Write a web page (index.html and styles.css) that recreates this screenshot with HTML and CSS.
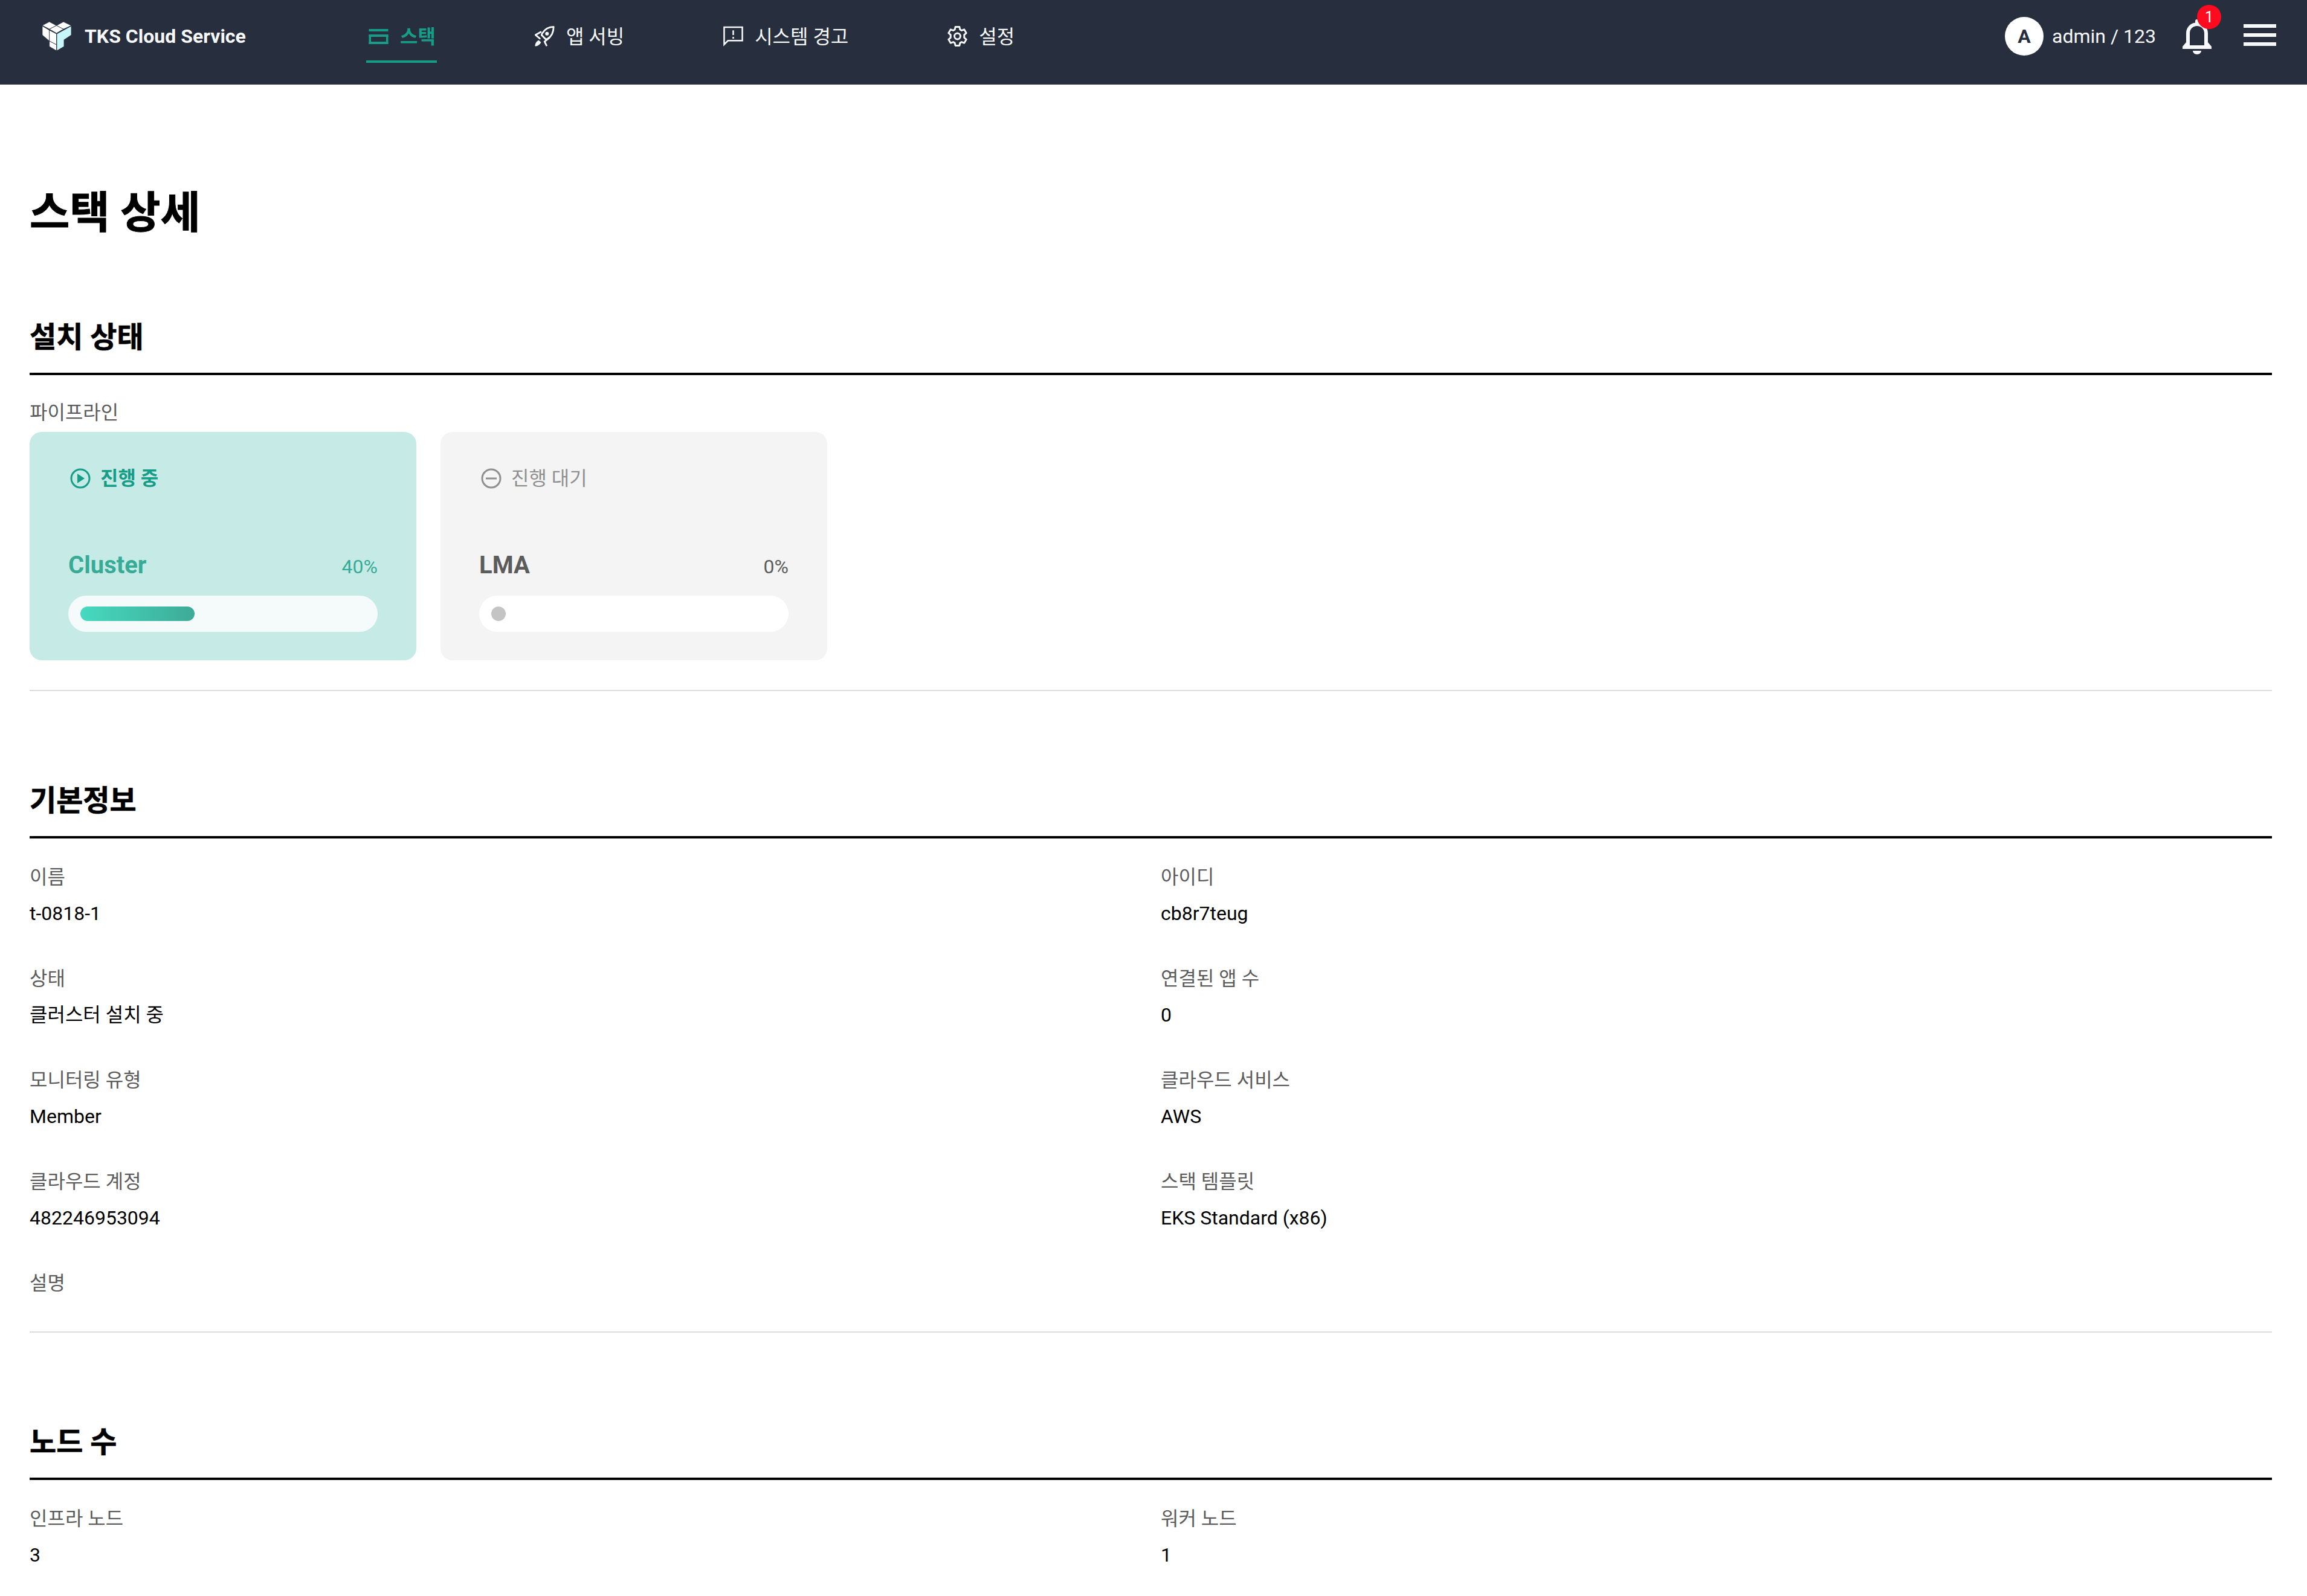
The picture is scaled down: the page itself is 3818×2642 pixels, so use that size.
FILE: index.html
```html
<!DOCTYPE html>
<html lang="ko">
<head>
<meta charset="utf-8">
<title>스택 상세</title>
<link rel="stylesheet" href="styles.css">
</head>
<body>
<header class="topbar">
  <div class="brand">
    <svg class="brand-logo" viewBox="0 0 48 48">
      <g fill="#fff" stroke="#272e3d" stroke-width="0.8" stroke-linejoin="round">
        <path d="M0 6 11.700 0l11.800 6.300-11.800 6z"/>
        <path d="M23.500 6.300 35 0l13 6.300-13 6z"/>
        <path d="M11.700 12.300l11.800-6 11.500 6-11.500 6.700z"/>
        <path d="M0 7l11.700 7v18L0 22z"/>
        <path d="M11.700 14l11.800 6v18l-11.800-6z"/>
        <path d="M11.700 32l11.800 6v10l-11.800-7z"/>
        <path fill="#c8f7fb" d="M24 20 48 7v15l-12 8v11l-12 7z"/>
      </g>
    </svg>
    <span class="brand-name">TKS Cloud Service</span>
  </div>
  <nav class="nav">
    <a class="nav-item active">
      <svg class="nav-icon" viewBox="0 0 32 34" fill="currentColor"><path d="M0 5h32v4H0zM0 14h32v4H0zM0 26h32v4H0z"/><path d="M0 14h3.500v16H0zM28.500 14H32v16h-3.500z"/></svg>
      <span>스택</span>
    </a>
    <a class="nav-item">
      <svg class="nav-icon" viewBox="0 0 34 36" fill="none" stroke="currentColor" stroke-width="3" stroke-linejoin="round" stroke-linecap="round"><path d="M32.500 1.500C24 1.500 17 6 12.500 13l-1 3L19 23.500l3-1C29 18 32.500 11 32.500 1.500z"/><path d="M10 10.700 1 15.700 8.300 22"/><path d="M25 20.700 16.700 27.300 20 34"/><path fill="currentColor" stroke="none" d="M0 35.500C0 30 3 27 6.500 25l4 3.500C9 32 5 35.500 0 35.500z"/><circle fill="currentColor" stroke="none" cx="21" cy="13.500" r="3.200"/></svg>
      <span>앱 서빙</span>
    </a>
    <a class="nav-item">
      <svg class="nav-icon" viewBox="0 0 34 34" fill="none" stroke="currentColor" stroke-width="2.600"><path d="M1.500 1.500h31v23H8L1.500 31z"/><path d="M17 7v8M17 18v3"/></svg>
      <span>시스템 경고</span>
    </a>
    <a class="nav-item">
      <svg class="nav-icon" viewBox="1.500 1 21 22" fill="none" stroke="currentColor" stroke-width="1.900" stroke-linejoin="round"><circle cx="12" cy="12" r="3.200"/><path d="M9.800 2h4.400l.6 2.800 1.700 1 2.800-1 2.200 3.800-2.200 1.900v3l2.200 1.900-2.200 3.800-2.800-1-1.700 1-.6 2.800H9.800l-.6-2.800-1.700-1-2.800 1-2.200-3.800 2.200-1.900v-3L2.500 8.600l2.200-3.800 2.800 1 1.700-1z"/></svg>
      <span>설정</span>
    </a>
  </nav>
  <div class="user">
    <span class="avatar">A</span>
    <span class="user-name">admin / 123</span>
    <div class="bell">
      <svg class="bell-icon" viewBox="0 0 48 58" fill="#f7f8fa"><path fill-rule="evenodd" d="M24 0c2 0 3 1 3 3v2.500C36 7 42 14 42 23v15l6 7v4H0v-4l6-7V23C6 14 12 7 21 5.500V3c0-2 1-3 3-3zM24 11c-7 0-12 5-12 12v20h24V23c0-7-5-12-12-12z"/><path d="M17 52h14c0 3-3 6-7 6s-7-3-7-6z"/></svg>
      <span class="badge">1</span>
    </div>
    <button class="menu" aria-label="menu"><i></i><i></i><i></i></button>
  </div>
</header>

<main class="page">
  <h1 class="page-title">스택 상세</h1>

  <section class="section pipeline-section">
    <h2 class="section-title">설치 상태</h2>
    <div class="section-body">
      <div class="label">파이프라인</div>
      <div class="cards">
        <article class="card card-active">
          <div class="card-status">
            <svg class="status-icon" viewBox="0 0 34 34"><circle cx="17" cy="17" r="15" fill="none" stroke="currentColor" stroke-width="3"/><path fill="currentColor" d="M12 9l12 8-12 8z"/></svg>
            <span>진행 중</span>
          </div>
          <div class="card-meta"><span class="card-name">Cluster</span><span class="card-pct">40%</span></div>
          <div class="track"><div class="fill" style="width:40%"></div></div>
        </article>
        <article class="card card-wait">
          <div class="card-status">
            <svg class="status-icon" viewBox="0 0 34 34"><circle cx="17" cy="17" r="15" fill="none" stroke="currentColor" stroke-width="3"/><path fill="currentColor" d="M8 15.500h18v3H8z"/></svg>
            <span>진행 대기</span>
          </div>
          <div class="card-meta"><span class="card-name">LMA</span><span class="card-pct">0%</span></div>
          <div class="track"><div class="fill" style="width:24px"></div></div>
        </article>
      </div>
    </div>
  </section>

  <section class="section info-section">
    <h2 class="section-title">기본정보</h2>
    <div class="section-body grid">
      <div class="field"><div class="label">이름</div><div class="value">t-0818-1</div></div>
      <div class="field"><div class="label">아이디</div><div class="value">cb8r7teug</div></div>
      <div class="field"><div class="label">상태</div><div class="value">클러스터 설치 중</div></div>
      <div class="field"><div class="label">연결된 앱 수</div><div class="value">0</div></div>
      <div class="field"><div class="label">모니터링 유형</div><div class="value">Member</div></div>
      <div class="field"><div class="label">클라우드 서비스</div><div class="value">AWS</div></div>
      <div class="field"><div class="label">클라우드 계정</div><div class="value">482246953094</div></div>
      <div class="field"><div class="label">스택 템플릿</div><div class="value">EKS Standard (x86)</div></div>
      <div class="field field-short"><div class="label">설명</div></div>
    </div>
  </section>

  <section class="section info-section">
    <h2 class="section-title">노드 수</h2>
    <div class="section-body grid">
      <div class="field"><div class="label">인프라 노드</div><div class="value">3</div></div>
      <div class="field"><div class="label">워커 노드</div><div class="value">1</div></div>
    </div>
  </section>
</main>
</body>
</html>
```

FILE: styles.css
```css
* { box-sizing: border-box; }
html, body { margin: 0; padding: 0; background: #fff; }
body { font-family: Roboto, "Noto Sans CJK KR", sans-serif; color: #000; height: 2642px; overflow: hidden; }

.topbar { height: 140px; background: #272e3d; display: flex; align-items: center; color: #f7f8fa; padding: 0 51px 20px 70px; }
.brand { display: flex; align-items: center; gap: 22px; width: 536px; }
.brand-logo { width: 48px; height: 48px; }
.brand-name { font-size: 32px; font-weight: 700; }
.nav { display: flex; gap: 158px; align-self: flex-start; }
.nav-item { display: flex; align-items: center; gap: 19px; font-size: 32px; height: 104px; padding: 20px 2px 0 4px; border-bottom: 4px solid transparent; white-space: nowrap; }
.nav-item span { position: relative; top: -2px; }
.nav-icon { width: 33px; height: 34px; flex: none; }
.nav-item.active { color: #169c87; font-weight: 700; border-bottom-color: #169c87; }
.user { margin-left: auto; display: flex; align-items: center; }
.avatar { width: 64px; height: 64px; border-radius: 50%; background: #fff; color: #272e3d; font-size: 32px; font-weight: 700; display: flex; align-items: center; justify-content: center; }
.user-name { font-size: 32px; margin-left: 14px; }
.bell { position: relative; margin-left: 44px; width: 48px; height: 58px; margin-top: 2px; }
.bell-icon { width: 48px; height: 58px; display: block; }
.badge { position: absolute; left: 24px; top: -24px; width: 40px; height: 40px; border-radius: 50%; background: #ff0a1e; color: #fff; font-size: 25px; display: flex; align-items: center; justify-content: center; }
.menu { margin-left: 53px; width: 54px; height: 36px; padding: 0; border: 0; background: none; display: flex; flex-direction: column; justify-content: space-between; margin-top: -4px; }
.menu i { display: block; height: 6px; background: #f7f8fa; }

.page { padding: 0 58px 0 49px; }
.page-title { margin: 0; padding-top: 168px; font-size: 72px; line-height: 90px; font-weight: 700; -webkit-text-stroke: 1px #000; }
.section { border-bottom: 2px solid #dcdcdc; }
.section:last-child { border-bottom: 0; }
.section-title { margin: 0; font-size: 48px; line-height: 60px; font-weight: 700; -webkit-text-stroke: 0.7px #000; padding: 0 0 28px; border-bottom: 4px solid #000; }
.pipeline-section { margin-top: 131px; padding-bottom: 49px; }
.info-section { margin-top: 152px; }
.section-body { padding-top: 42px; }
.label { font-size: 32px; line-height: 40px; color: #5c5c5c; }
.info-section .section-body { padding-top: 44px; }
.cards { display: flex; gap: 40px; margin-top: 12px; }
.card { width: 640px; height: 378px; border-radius: 20px; padding: 59px 64px 0 64px; }
.card-active { background: #c6ebe6; color: #169c87; }
.card-wait { background: #f4f4f4; color: #8f8f8f; }
.card-status { display: flex; align-items: center; gap: 16px; font-size: 32px; line-height: 36px; padding-left: 3px; }
.card-active .card-status { font-weight: 700; }
.status-icon { width: 34px; height: 34px; flex: none; }
.card-meta { display: flex; align-items: baseline; justify-content: space-between; margin-top: 101px; }
.card-name { font-size: 40px; font-weight: 700; line-height: 50px; }
.card-pct { font-size: 32px; font-weight: 400; }
.card-active .card-meta { color: #37ab96; }
.card-wait .card-meta { color: #5c5c5c; }
.track { height: 60px; border-radius: 30px; padding: 18px 20px; margin-top: 25px; }
.card-active .track { background: #f5fbfa; }
.card-wait .track { background: #fff; }
.fill { height: 24px; border-radius: 12px; }
.card-active .fill { background: linear-gradient(90deg, #46dac0, #3dab97); }
.card-wait .fill { background: #c4c4c4; }

.grid { display: grid; grid-template-columns: 1fr 1fr; column-gap: 33px; }
.field { height: 168px; }
.field-short { height: 100px; }
.value { font-size: 32px; line-height: 40px; margin-top: 20px; color: #000; }
```
